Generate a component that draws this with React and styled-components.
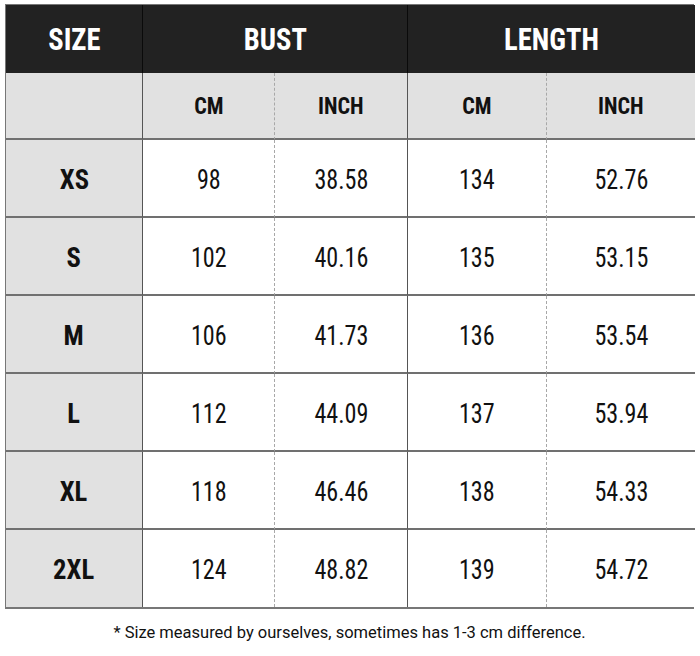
import React from "react";
import styled, { createGlobalStyle } from "styled-components";

const Global = createGlobalStyle`
  html, body { margin: 0; padding: 0; background: #ffffff; }
  body { font-family: "Roboto Condensed", Roboto, "Liberation Sans", sans-serif; }
`;

const Page = styled.div`
  width: 700px;
  height: 656px;
  box-sizing: border-box;
  padding: 4px 6px 0 5px;
  display: flex;
  flex-direction: column;
  align-items: stretch;
`;

const Grid = styled.div`
  display: grid;
  grid-template-columns: 137px 132px 133px 139px 148px;
  grid-template-rows: 68px 67px repeat(5, 78px) 77px;
  border: 1px solid #777;
  border-bottom: 2px solid #777;
  box-sizing: border-box;
`;

const Cell = styled.div`
  display: flex;
  align-items: center;
  justify-content: center;
  box-sizing: border-box;
  grid-column: ${(p) => p.$span || "auto"};
  background: ${(p) => (p.$dark ? "#222222" : p.$gray ? "#e1e1e1" : "#ffffff")};
  color: ${(p) => (p.$dark ? "#ffffff" : "#111111")};
  border-right: ${(p) =>
    p.$last
      ? "none"
      : p.$dotted
      ? "1px dashed #a8a8a8"
      : p.$dark
      ? "1px solid #0a0a0a"
      : "1px solid #555"};
  border-bottom: ${(p) => (p.$noBottom ? "none" : p.$dark ? "none" : "2px solid #707070")};
  font-size: ${(p) => p.$size || 28}px;
  font-weight: ${(p) => (p.$bold ? 700 : 400)};
`;

const Txt = styled.span`
  display: inline-block;
  transform: scaleX(${(p) => p.$sx || 0.86});
  padding-top: ${(p) => p.$dy || 0}px;
`;

const Note = styled.p`
  margin: 14px 0 0;
  text-align: center;
  font-family: Roboto, "Liberation Sans", sans-serif;
  font-size: 16.5px;
  color: #111;
`;

const rows = [
  ["XS", "98", "38.58", "134", "52.76"],
  ["S", "102", "40.16", "135", "53.15"],
  ["M", "106", "41.73", "136", "53.54"],
  ["L", "112", "44.09", "137", "53.94"],
  ["XL", "118", "46.46", "138", "54.33"],
  ["2XL", "124", "48.82", "139", "54.72"],
];

export default function App() {
  return (
    <>
      <Global />
      <Page>
        <Grid>
          <Cell $dark $bold $size={31}><Txt $sx={0.92}>SIZE</Txt></Cell>
          <Cell $dark $bold $size={31} $span="span 2"><Txt $sx={0.92}>BUST</Txt></Cell>
          <Cell $dark $bold $size={31} $span="span 2" $last><Txt $sx={0.92}>LENGTH</Txt></Cell>

          <Cell $gray />
          <Cell $gray $bold $size={24} $dotted><Txt $sx={0.92}>CM</Txt></Cell>
          <Cell $gray $bold $size={24}><Txt $sx={0.92}>INCH</Txt></Cell>
          <Cell $gray $bold $size={24} $dotted><Txt $sx={0.92}>CM</Txt></Cell>
          <Cell $gray $bold $size={24} $last><Txt $sx={0.92}>INCH</Txt></Cell>

          {rows.map((r, i) => {
            const lastRow = i === rows.length - 1;
            return (
              <React.Fragment key={r[0]}>
                <Cell $gray $bold $size={28} $noBottom={lastRow}><Txt $sx={0.95} $dy={2}>{r[0]}</Txt></Cell>
                <Cell $dotted $noBottom={lastRow}><Txt $dy={2}>{r[1]}</Txt></Cell>
                <Cell $noBottom={lastRow}><Txt $dy={2}>{r[2]}</Txt></Cell>
                <Cell $dotted $noBottom={lastRow}><Txt $dy={2}>{r[3]}</Txt></Cell>
                <Cell $last $noBottom={lastRow}><Txt $dy={2}>{r[4]}</Txt></Cell>
              </React.Fragment>
            );
          })}
        </Grid>
        <Note>* Size measured by ourselves, sometimes has 1-3 cm difference.</Note>
      </Page>
    </>
  );
}
